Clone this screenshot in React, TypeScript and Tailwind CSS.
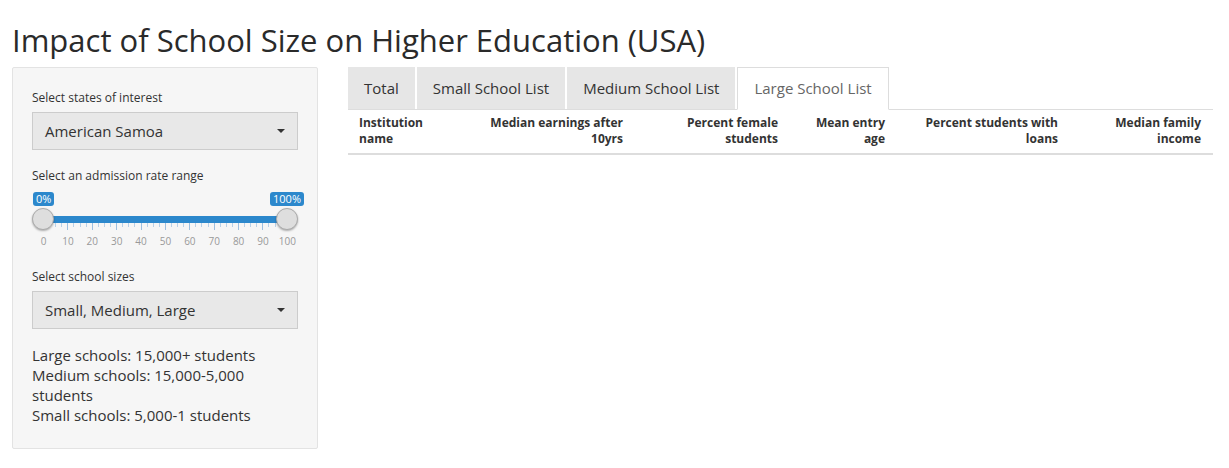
import React from 'react';

const ticks = Array.from({ length: 41 }, (_, i) => i);
const labels = Array.from({ length: 11 }, (_, i) => i * 10);

function Caret() {
  return (
    <svg width="8" height="4" viewBox="0 0 8 4" className="shrink-0">
      <path d="M0 0 L8 0 L4 4 Z" fill="#333" />
    </svg>
  );
}

function SelectBox({ value }: { value: string }) {
  return (
    <div className="h-[38px] flex items-center justify-between px-[12px] bg-[#e8e8e8] border border-[#cccccc] text-[15px] text-[#333]">
      <span>{value}</span>
      <Caret />
    </div>
  );
}

function Handle({ side }: { side: 'left' | 'right' }) {
  return (
    <div
      className={
        side === 'left'
          ? 'absolute -top-[8px] -left-[11px] w-[22px] h-[22px] rounded-full bg-[#dedede] border border-[#ababab] shadow-[0_1px_2px_rgba(0,0,0,0.3)]'
          : 'absolute -top-[8px] -right-[11px] w-[22px] h-[22px] rounded-full bg-[#dedede] border border-[#ababab] shadow-[0_1px_2px_rgba(0,0,0,0.3)]'
      }
    />
  );
}

function RangeSlider() {
  return (
    <div className="pt-[7px] h-[83px]">
      <div className="flex justify-between pl-[1px] -mr-[6px]">
        <span className="h-[14px] px-[3px] rounded-[3px] bg-[#2c88cc] text-white text-[11px] leading-[14px]">0%</span>
        <span className="h-[14px] px-[3px] rounded-[3px] bg-[#2c88cc] text-white text-[11px] leading-[14px]">100%</span>
      </div>
      <div className="relative mt-[10px] ml-[11px] w-[244px] h-[7px] bg-[#2c88cc]">
        <Handle side="left" />
        <Handle side="right" />
      </div>
      <div className="flex justify-between items-start ml-[11px] w-[245px]">
        {ticks.map((i) =>
          i % 4 === 0 ? (
            <div key={i} className="w-px h-[7px] bg-[#9dbfe0]" />
          ) : (
            <div key={i} className="w-px h-[4px] bg-[#b8d0e8]" />
          )
        )}
      </div>
      <div className="flex justify-between ml-[11px] w-[245px] mt-[4px]">
        {labels.map((n) => (
          <div key={n} className="w-px flex justify-center">
            <span className="whitespace-nowrap text-[10px] leading-[14px] text-[#999]">{n}</span>
          </div>
        ))}
      </div>
    </div>
  );
}

const columns: { lines: string[]; w: string; right: boolean }[] = [
  { lines: ['Institution', 'name'], w: 'w-[132px]', right: false },
  { lines: ['Median earnings after', '10yrs'], w: 'w-[155px]', right: true },
  { lines: ['Percent female', 'students'], w: 'w-[155px]', right: true },
  { lines: ['Mean entry', 'age'], w: 'w-[107px]', right: true },
  { lines: ['Percent students with', 'loans'], w: 'w-[173px]', right: true },
  { lines: ['Median family', 'income'], w: 'w-[143px]', right: true },
];

const tabs = ['Total', 'Small School List', 'Medium School List', 'Large School List'];

export default function App() {
  return (
    <div className="w-[1229px] h-[468px] bg-white text-[#333] font-['Open_Sans',sans-serif] pl-[12px]">
      <h2 className="pt-[24px] text-[31px] leading-[32px] font-normal text-[#2a2a2a] mb-[11px]">
        Impact of School Size on Higher Education (USA)
      </h2>
      <div className="flex items-start gap-[30px]">
        <aside className="w-[306px] bg-[#f6f6f6] border border-[#e3e3e3] rounded-[2px] px-[19px] pt-[21px] pb-[23px]">
          <div className="text-[12px] leading-[18px] mb-[5px]">Select states of interest</div>
          <SelectBox value="American Samoa" />
          <div className="text-[12px] leading-[18px] mt-[17px]">Select an admission rate range</div>
          <RangeSlider />
          <div className="text-[12px] leading-[17px] mb-[6px]">Select school sizes</div>
          <SelectBox value="Small, Medium, Large" />
          <p className="mt-[16px] text-[15px] leading-[20px]">
            Large schools: 15,000+ students
            <br />
            Medium schools: 15,000-5,000
            <br />
            students
            <br />
            Small schools: 5,000-1 students
          </p>
        </aside>
        <main className="w-[865px]">
          <ul className="flex border-b border-[#dddddd] h-[43px]">
            {tabs.map((t, i) => {
              const active = i === tabs.length - 1;
              return (
                <li
                  key={t}
                  className={
                    active
                      ? 'h-[43px] px-[16px] mr-[2px] flex items-center text-[15px] text-[#666] bg-white border border-[#dddddd] border-b-white'
                      : 'h-[42px] px-[16px] mr-[2px] flex items-center text-[15px] text-[#333] bg-[#e6e6e6]'
                  }
                >
                  {t}
                </li>
              );
            })}
          </ul>
          <div className="flex border-b-2 border-[#dddddd] pt-[5px] pb-[6px]">
            {columns.map((c) => (
              <div
                key={c.lines[0]}
                className={
                  c.right
                    ? c.w + ' pr-[12px] text-right text-[12px] leading-[16px] font-bold text-[#333]'
                    : c.w + ' pl-[11px] text-left text-[12px] leading-[16px] font-bold text-[#333]'
                }
              >
                {c.lines[0]}
                <br />
                {c.lines[1]}
              </div>
            ))}
          </div>
        </main>
      </div>
    </div>
  );
}
